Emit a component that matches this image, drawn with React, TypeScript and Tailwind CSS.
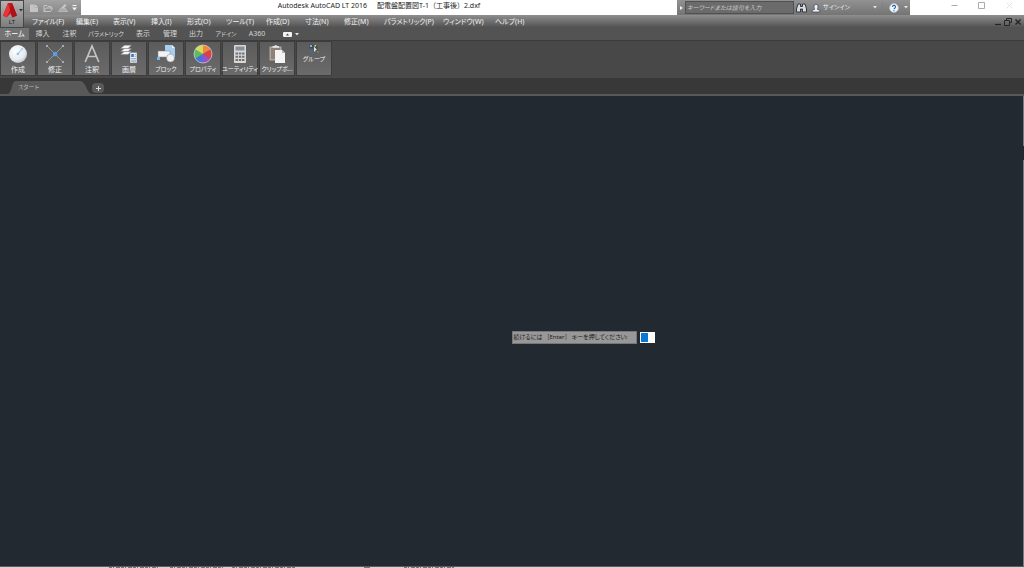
import React, { useState } from "react";

const menus = [
  { label: "ファイル(F)", width: "w-[44px]" },
  { label: "編集(E)", width: "w-[37px]" },
  { label: "表示(V)", width: "w-[38px]" },
  { label: "挿入(I)", width: "w-[36px]" },
  { label: "形式(O)", width: "w-[39px]" },
  { label: "ツール(T)", width: "w-[40px]" },
  { label: "作成(D)", width: "w-[39px]" },
  { label: "寸法(N)", width: "w-[39px]" },
  { label: "修正(M)", width: "w-[40px]" },
  { label: "パラメトリック(P)", width: "w-[59px]" },
  { label: "ウィンドウ(W)", width: "w-[52px]" },
  { label: "ヘルプ(H)", width: "w-[40px]" },
];

const tabs = [
  { label: "ホーム", size: "w-[29px] text-[7px]" },
  { label: "挿入", size: "w-[27px] text-[7px]" },
  { label: "注釈", size: "w-[27px] text-[7px]" },
  { label: "パラメトリック", size: "w-[46px] text-[6px]" },
  { label: "表示", size: "w-[28px] text-[7px]" },
  { label: "管理", size: "w-[26px] text-[7px]" },
  { label: "出力", size: "w-[26px] text-[7px]" },
  { label: "アドイン", size: "w-[34px] text-[6px]" },
  { label: "A360", size: "w-[28px] text-[7px]" },
];

function CircleIcon() {
  return (
    <svg viewBox="0 0 20 20" className="size-5">
      <defs>
        <radialGradient id="disc" cx="0.4" cy="0.35" r="0.7">
          <stop offset="0" stopColor="#ffffff" />
          <stop offset="0.7" stopColor="#e6e9ed" />
          <stop offset="1" stopColor="#b9bec6" />
        </radialGradient>
      </defs>
      <circle cx="10" cy="10" r="9" fill="url(#disc)" />
      <path d="M10 10l4-5" stroke="#86bdf0" strokeWidth="1" />
      <rect x="8.7" y="8.7" width="2.4" height="2.4" fill="#8fc5f5" />
      <rect x="13" y="4" width="2" height="2" fill="#a9d2f7" />
    </svg>
  );
}

function ModifyIcon() {
  return (
    <svg viewBox="0 0 20 20" className="size-5">
      <path d="M2 2l16 16M18 2L2 18" stroke="#999" strokeWidth="0.9" />
      <rect x="8" y="8" width="4.2" height="4.2" fill="#5b9de4" />
      <path d="M1 1h2v2H1zM17 1h2v2h-2zM1 17h2v2H1zM17 17h2v2h-2z" fill="#a4adb6" />
    </svg>
  );
}

function AnnotateIcon() {
  return (
    <svg viewBox="0 0 20 20" className="size-5" fill="none" stroke="#c4c4c4" strokeWidth="1.7">
      <path d="M3.200 18L10 2l6.800 16M5.800 12.500h8.400" />
    </svg>
  );
}

function LayerIcon() {
  return (
    <svg viewBox="0 0 20 20" className="size-5">
      <g fill="#f4f4f4" stroke="#727272" strokeWidth="0.4">
        <path d="M1.500 10.500l4-3h7l-3.500 3z" />
        <path d="M1.500 7.500l4-3h7l-3.500 3z" />
        <path d="M1.500 4.500l4-3.300h7L9 4.500z" />
      </g>
      <path d="M11 8.500h7V19h-7z" fill="#edf1f6" stroke="#686c73" strokeWidth="0.4" />
      <path d="M12.200 10h2.600v3h-2.600z" fill="#3379cc" />
      <path d="M15.600 10.500h1.600M15.600 12.300h1.600M12.200 14.500h5M12.200 16.200h5M12.200 17.700h5" stroke="#728aa8" strokeWidth="0.7" />
    </svg>
  );
}

function BlockIcon() {
  return (
    <svg viewBox="0 0 20 20" className="size-5">
      <path d="M9 1h7l3 3v9H9z" fill="#a7cdf0" />
      <path d="M16 1v3h3z" fill="#e4f1fc" />
      <path d="M2 7h12v6H2z" fill="#f0f2f4" stroke="#7c8792" strokeWidth="0.5" />
      <circle cx="14.500" cy="14" r="4" fill="#eef0f2" stroke="#7c8792" strokeWidth="0.5" />
      <path d="M1 13h3v3H1z" fill="#7fb3e4" />
    </svg>
  );
}

const wedges = [
  { color: "#ef8a3c", d: "M10 10V1A9 9 0 0 1 17.800 5.500z" },
  { color: "#de4141", d: "M10 10l7.800-4.500a9 9 0 0 1 0 9z" },
  { color: "#9e4fc0", d: "M10 10l7.800 4.500A9 9 0 0 1 10 19z" },
  { color: "#4a6fe0", d: "M10 10v9a9 9 0 0 1-7.800-4.500z" },
  { color: "#58bd63", d: "M10 10l-7.800 4.500a9 9 0 0 1 0-9z" },
  { color: "#d5dc5c", d: "M10 10L2.200 5.500A9 9 0 0 1 10 1z" },
];

function ColorWheelIcon() {
  return (
    <svg viewBox="0 0 20 20" className="size-5">
      {wedges.map((w) => (
        <path key={w.color} d={w.d} fill={w.color} />
      ))}
      <circle cx="10" cy="10" r="9" fill="none" stroke="#d5d5d5" strokeWidth="0.7" />
    </svg>
  );
}

function CalculatorIcon() {
  return (
    <svg viewBox="0 0 20 20" className="size-5">
      <rect x="4" y="1" width="12" height="18" rx="0.8" fill="#d9d9d9" />
      <rect x="5.500" y="2.500" width="9" height="4" fill="#84909a" />
      <g fill="#747474">
        <path d="M5.500 8.500H8v2H5.500zM8.800 8.500h2.500v2H8.800zM12 8.500h2.500v2H12z" />
        <path d="M5.500 11.700H8v2H5.500zM8.800 11.700h2.500v2H8.800zM12 11.700h2.500v2H12z" />
        <path d="M5.500 15H8v2H5.500zM8.800 15h2.500v2H8.800zM12 15h2.500v2H12z" />
      </g>
    </svg>
  );
}

function ClipboardIcon() {
  return (
    <svg viewBox="0 0 20 20" className="size-5">
      <path d="M2.500 2.500h12v14h-12z" fill="#b3a699" />
      <path d="M4 4h9v11H4z" fill="#8c8279" />
      <path d="M5.500 3.800V2H7.500a1.300 1.300 0 0 1 2.500 0H12v1.800z" fill="#e5e5e5" />
      <path d="M8 6h7l3 3v10H8z" fill="#f4f4f4" />
      <path d="M15 6v3h3z" fill="#b5b5b5" />
    </svg>
  );
}

function GroupIcon() {
  return (
    <svg viewBox="0 0 10 10" className="size-[10px]">
      <path d="M0.500 0.500h4v4h-4z" fill="#3b4c60" />
      <path d="M1 1h2v2H1z" fill="#86aed4" />
      <path d="M1 6h3v2.500H1z" fill="#3d6da3" />
      <path d="M4.500 2.500h4v5h-4z" fill="#454b40" />
      <path d="M5 2.500l3 3.500H6.800L6 8 5 7z" fill="#e8e8e8" />
      <path d="M5.500 1H7v1.500H5.500z" fill="#d7d05b" />
      <path d="M8 7h1.500v1.500H8z" fill="#63a363" />
    </svg>
  );
}

const panels = [
  { label: "作成", icon: <CircleIcon />, size: "text-[7px]" },
  { label: "修正", icon: <ModifyIcon />, size: "text-[7px]" },
  { label: "注釈", icon: <AnnotateIcon />, size: "text-[7px]" },
  { label: "画層", icon: <LayerIcon />, size: "text-[7px]" },
  { label: "ブロック", icon: <BlockIcon />, size: "text-[6px]" },
  { label: "プロパティ", icon: <ColorWheelIcon />, size: "text-[6px]" },
  { label: "ユーティリティ", icon: <CalculatorIcon />, size: "text-[6px]" },
  { label: "クリップボ...", icon: <ClipboardIcon />, size: "text-[6px]" },
  { label: "グループ", icon: <GroupIcon />, size: "text-[6px]" },
];

function Caret({ className = "text-[#e4e4e4]" }: { className?: string }) {
  return (
    <svg viewBox="0 0 4 3" className={"h-[3px] w-1 shrink-0 " + className}>
      <path d="M0 0h4L2 2.500z" fill="currentColor" />
    </svg>
  );
}

function AppButton() {
  return (
    <button
      aria-label="アプリケーション メニュー"
      className="flex w-6 shrink-0 flex-col items-center border border-[#454545] bg-linear-to-b from-[#b4b4b4] to-[#7d7d7d] pt-px"
    >
      <span className="flex items-center gap-px">
        <svg viewBox="0 0 16 17" className="h-[17px] w-4">
          <path d="M6 1h4l5 12.500-4.500 2-2-4-4 4L1 13.500z" fill="#c8171e" />
          <path d="M6 1l2 7-3.500 7.500L1 13.500z" fill="#e63437" />
          <path d="M10 1l5 12.500-4.500 2L8 8z" fill="#ad1016" />
        </svg>
        <Caret className="text-[#333]" />
      </span>
      <span className="text-[6px] leading-[7px] text-[#222]">LT</span>
    </button>
  );
}

function QuickAccess() {
  return (
    <div className="flex w-[57px] shrink-0 items-center justify-between bg-linear-to-b from-[#a2a2a2] to-[#858585] pr-1 pl-[5px]">
      <button aria-label="新規作成">
        <svg viewBox="0 0 10 10" className="size-[10px]">
          <path d="M1 1.500h5l3 3V9H1z" fill="#c4c4c4" />
          <path d="M6 1.500v3h3" fill="#e0e0e0" stroke="#8e8e8e" strokeWidth="0.5" />
        </svg>
      </button>
      <button aria-label="開く">
        <svg viewBox="0 0 10 10" className="size-[10px]" fill="none" stroke="#c4c4c4">
          <path d="M1 8.500v-6h3l1 1h3v1.500M1 8.500l2-3.500h6.500L7.500 8.500z" />
        </svg>
      </button>
      <button aria-label="印刷">
        <svg viewBox="0 0 10 10" className="size-[10px]">
          <path d="M3 5l4-4 1.500 1.500L6 5z" fill="#c9c9c9" />
          <path d="M0.500 8.500l2-3h5l2 3z" fill="#aaa" stroke="#cacaca" strokeWidth="0.6" />
        </svg>
      </button>
      <button aria-label="カスタマイズ">
        <svg viewBox="0 0 5 6" className="h-[6px] w-[5px]">
          <path d="M0.500 0h4v1h-4zM0 2.500h5L2.500 5.500z" fill="#f4f4f4" />
        </svg>
      </button>
    </div>
  );
}

function InfoCenter() {
  return (
    <div className="flex w-[233px] shrink-0 items-center bg-linear-to-b from-[#929292] to-[#747474]">
      <button aria-label="検索を閉じる" className="flex w-2 justify-center">
        <svg viewBox="0 0 3 4" className="h-1 w-[3px]">
          <path d="M0 0l3 2-3 2z" fill="#eee" />
        </svg>
      </button>
      <input
        aria-label="検索"
        placeholder="キーワードまたは語句を入力"
        className="h-[13px] w-[109px] border border-[#505050] bg-[#6b6b6b] pl-px text-[6px] leading-[11px] text-white italic outline-none placeholder:text-[#c9c9c9]"
      />
      <button aria-label="検索の実行" className="ml-[2px]">
        <svg viewBox="0 0 11 10" className="h-[10px] w-[11px]">
          <path d="M2 1h2.500v2.500h2V1H9l1.500 5v3h-4V6h-2v3h-4V6z" fill="#d9dde2" stroke="#303842" strokeWidth="1" />
        </svg>
      </button>
      <button className="ml-1 flex flex-1 items-center gap-[2px] text-[6px] text-[#f0f0f0]">
        <svg viewBox="0 0 10 10" className="size-[10px]">
          <path d="M3 3.500a2 2.300 0 0 1 4 0C7 5 6.300 5.500 6.300 6.200L9 7.500V9H1V7.500l2.700-1.300C3.700 5.500 3 5 3 3.500z" fill="#edf1f6" stroke="#35404e" strokeWidth="0.7" />
        </svg>
        サインイン
        <span className="flex flex-1 justify-end pr-[5px]">
          <Caret />
        </span>
      </button>
      <button aria-label="ヘルプ" className="flex items-center gap-[5px] border-l border-[#7f7f7f] pr-[2px] pl-[6px]">
        <svg viewBox="0 0 10 10" className="size-[10px]">
          <circle cx="5" cy="5" r="4.400" fill="#f0f5fa" stroke="#b8c4cf" strokeWidth="0.6" />
          <path d="M3.500 4a1.500 1.500 0 1 1 2.200 1.200Q5 5.600 5 6.300M5 7.200v1" fill="none" stroke="#2762a8" strokeWidth="1.100" />
        </svg>
        <Caret />
      </button>
    </div>
  );
}

function WindowControls() {
  return (
    <div className="flex w-[114px] shrink-0 items-start justify-end pt-px text-[#aaa]">
      <button aria-label="最小化" className="flex w-[27px] justify-center">
        <svg viewBox="0 0 9 9" className="size-[9px]" stroke="currentColor">
          <path d="M1.500 4.500h6" />
        </svg>
      </button>
      <button aria-label="最大化" className="flex w-[27px] justify-center">
        <svg viewBox="0 0 9 9" className="size-[9px]" fill="none" stroke="currentColor">
          <path d="M1.500 1.500h6v6h-6z" />
        </svg>
      </button>
      <button aria-label="閉じる" className="flex w-[29px] justify-center text-[#e6e6e6]">
        <svg viewBox="0 0 9 9" className="size-[9px]" stroke="currentColor">
          <path d="M1.500 1.500l6 6M7.500 1.500l-6 6" />
        </svg>
      </button>
    </div>
  );
}

function MenuBar() {
  return (
    <nav className="flex h-[13px] items-center bg-linear-to-b from-[#8f8f8f] to-[#505050] pl-2 text-[7px] leading-[13px] text-[#f0f0f0]">
      {menus.map((menu) => (
        <button key={menu.label} className={"shrink-0 text-left whitespace-nowrap " + menu.width}>
          {menu.label}
        </button>
      ))}
      <div className="ml-auto flex items-center gap-[2px] pr-[2px] text-[#262626]">
        <button aria-label="図面を最小化">
          <svg viewBox="0 0 8 8" className="size-2" stroke="currentColor">
            <path d="M1 6.500h6" strokeWidth="1.200" />
          </svg>
        </button>
        <button aria-label="図面を元に戻す">
          <svg viewBox="0 0 8 8" className="size-2" fill="none" stroke="currentColor">
            <path d="M2.500 2.500v-2h5v4h-2M0.500 2.500h5v5h-5z" />
          </svg>
        </button>
        <button aria-label="図面を閉じる">
          <svg viewBox="0 0 8 8" className="size-2" stroke="currentColor">
            <path d="M1.500 1.500l5 5M6.500 1.500l-5 5" strokeWidth="1.500" />
          </svg>
        </button>
      </div>
    </nav>
  );
}

export default function App() {
  const [activeTab, setActiveTab] = useState("ホーム");

  return (
    <div className="flex min-h-screen flex-col overflow-hidden bg-[#222930] font-['Noto_Sans','Noto_Sans_CJK_JP',sans-serif] [font-feature-settings:'palt']">
      <header className="flex bg-white">
        <AppButton />
        <div className="min-w-0 flex-1">
          <div className="flex h-[15px] bg-white">
            <QuickAccess />
            <h1 className="flex flex-1 items-center justify-center gap-[10px] pb-[3px] text-[7px] whitespace-nowrap text-[#222] [font-feature-settings:normal]">
              <span>Autodesk AutoCAD LT 2016</span>
              <span>配電盤配置図T-1（工事後）2.dxf</span>
            </h1>
            <InfoCenter />
            <WindowControls />
          </div>
          <MenuBar />
        </div>
      </header>

      <div className="flex h-[13px] items-center border-b border-[#3b3b3b] bg-[#535353] leading-3 text-[#d4d4d4]">
        {tabs.map((tab) => (
          <button
            key={tab.label}
            onClick={() => setActiveTab(tab.label)}
            className={
              "h-full shrink-0 text-center whitespace-nowrap " +
              tab.size +
              (activeTab === tab.label ? " bg-[#737373] text-white" : "")
            }
          >
            {tab.label}
          </button>
        ))}
        <button aria-label="リボンを最小化" className="ml-3 flex items-center gap-[3px]">
          <svg viewBox="0 0 9 5" className="h-[5px] w-[9px]">
            <rect width="9" height="5" rx="1" fill="#f2f2f2" />
            <path d="M3 3.500h3L4.500 1.500z" fill="#444" />
          </svg>
          <Caret />
        </button>
      </div>

      <section className="flex gap-px bg-[#484848] pb-[2px]">
        {panels.map((panel) => (
          <button
            key={panel.label}
            className={
              "flex h-[35px] w-9 shrink-0 flex-col items-center border border-[#3d3d3d] bg-linear-to-b from-[#5b5b5b] to-[#6b6b6b] pt-[2px] leading-[11px] whitespace-nowrap text-[#f0f0f0] " +
              panel.size
            }
          >
            {panel.icon}
            {panel.label}
          </button>
        ))}
      </section>

      <div className="flex h-[18px] items-end border-b-2 border-[#595959] bg-[#383838]">
        <button className="relative ml-2 flex h-[14px] w-[84px] items-center pl-[10px] text-[6px] text-[#b5b5b5]">
          <svg viewBox="0 0 84 14" preserveAspectRatio="none" className="absolute inset-0 size-full">
            <path d="M0 14C4 14 3 1 8 1H72C78 1 79 14 84 14z" fill="#595959" />
          </svg>
          <span className="relative">スタート</span>
        </button>
        <button aria-label="新規図面" className="mb-px flex h-[10px] w-3 items-center justify-center rounded-sm bg-[#595959]">
          <svg viewBox="0 0 5 5" className="size-[5px]" stroke="#d8d8d8">
            <path d="M0 2.500h5M2.500 0v5" />
          </svg>
        </button>
      </div>

      <main className="relative flex-1 border-r border-[#7c7c7c]">
        <div className="absolute top-[50px] -right-px h-[14px] w-px bg-[#222930]" />
        <div className="absolute top-[235px] left-1/2 flex items-center gap-[3px]">
          <label
            htmlFor="prompt"
            className="w-[125px] border border-[#777] bg-[#989898] px-px text-[6px] leading-[11px] whitespace-nowrap text-[#222]"
          >
            続けるには<span className="px-1">［Enter］</span>キーを押してください:
          </label>
          <span className="flex h-[11px] w-[15px] bg-white p-px">
            <input id="prompt" className="h-[9px] w-[7px] bg-[#0878d7] outline-none" />
          </span>
        </div>
      </main>

      <footer className="h-[2px] border-t border-[#5c5c5c] bg-[#d5d5d5]">
        {/* tops of the clipped status line */}
        <svg className="block h-px w-full" stroke="#777">
          <path d="M109 0.500h49M170 0.500h54M232 0.500h64M404 0.500h50" strokeDasharray="3 1 1 2 4 1" />
          <path d="M364 0.500h6" />
        </svg>
      </footer>
    </div>
  );
}
